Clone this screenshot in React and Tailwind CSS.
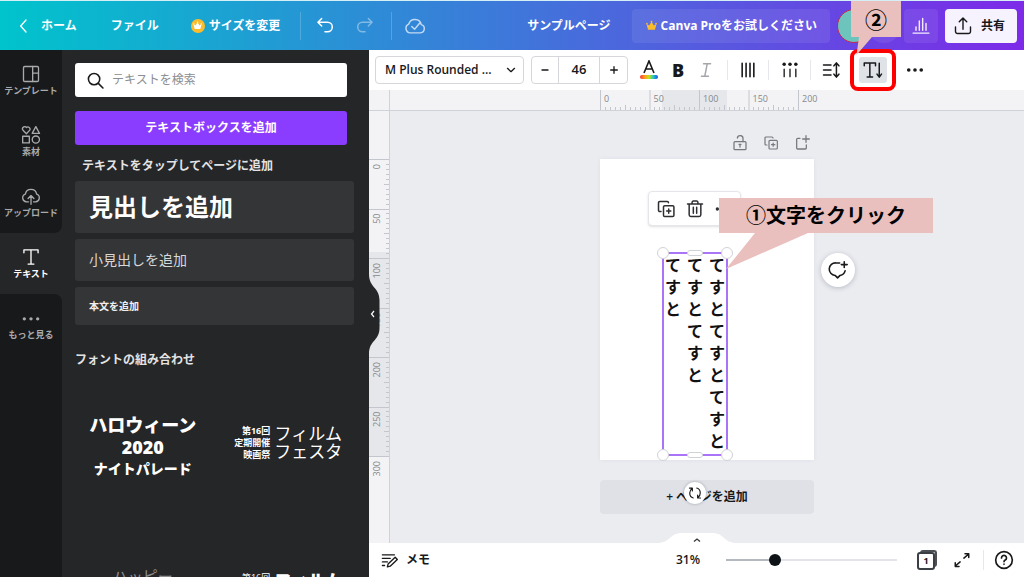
import { useState } from "react";

//labels on the rulers, one every 50mm
const topMarks = [0, 50, 100, 150, 200];
const sideMarks = [0, 50, 100, 150, 200, 250, 300];
//pixels for 50mm at the current zoom
const STEP = 49.5;

function Icon({ size = 20, width = 1.5, className = "", children }) {
  return (
    <svg
      width={size}
      height={size}
      viewBox="0 0 24 24"
      fill="none"
      stroke="currentColor"
      strokeWidth={width}
      strokeLinecap="round"
      strokeLinejoin="round"
      className={`shrink-0 ${className}`}
      aria-hidden="true"
    >
      {children}
    </svg>
  );
}

function Crown({ size, className }) {
  return (
    <svg
      width={size}
      height={size}
      viewBox="0 0 12 12"
      className={className}
      fill="currentColor"
      aria-hidden="true"
    >
      <path d="M2.2 10.5h7.6l1.6-6.2-2.9 1.8L6 1.6 3.500 6.100.6 4.300z" />
      <circle cx="6" cy="1.700" r="1" />
      <circle cx="1" cy="4" r=".9" />
      <circle cx="11" cy="4" r=".9" />
    </svg>
  );
}

const CopyIcon = ({ size }) => (
  <Icon size={size} width={1.8}>
    <path d="M6 15H4.500A1.500 1.500 0 0 1 3 13.500v-9A1.500 1.500 0 0 1 4.500 3h9A1.500 1.500 0 0 1 15 4.500" />
    <rect x="9" y="8" width="12.500" height="13" rx="1.500" />
    <path d="M15.250 12v5M12.750 14.500h5" />
  </Icon>
);

function Header() {
  return (
    <header className="flex h-[50px] shrink-0 items-center border-t border-[#d5eff7] bg-linear-to-r/srgb from-[#00c4cc] to-[#7d2ae8] pr-[7px] pl-4 text-xs font-bold text-white">
      <nav className="flex items-center">
        <a href="#home" className="flex items-center gap-[9px]">
          <Icon size={16} width={2}>
            <path d="M15 3l-8 9 8 9" />
          </Icon>
          ホーム
        </a>
        <button className="ml-[34px]">ファイル</button>
        <button className="ml-8 flex items-center gap-1">
          <span className="flex size-[14px] items-center justify-center rounded-full bg-[#fdbc2c]">
            <Crown size={9} className="text-white" />
          </span>
          サイズを変更
        </button>
      </nav>
      <div className="ml-5 h-7 w-px bg-white/20" />
      <button aria-label="元に戻す" className="ml-[14px]">
        <Icon size={20} width={1.800}>
          <path d="M8 3L3.500 7.500 8 12M3.500 7.500H15a5 5 0 0 1 0 11.500h-3" />
        </Icon>
      </button>
      <button aria-label="やり直す" className="ml-5 text-white/40">
        <Icon size={20} width={1.800}>
          <path d="M16 3l4.500 4.500L16 12M20.500 7.500H9A5 5 0 0 0 9 19h3" />
        </Icon>
      </button>
      <div className="ml-4 h-7 w-px bg-white/20" />
      <button aria-label="保存済み" className="ml-3 text-white/70">
        <Icon size={22} width={1.600}>
          <path d="M7 19.500a5 5 0 0 1-1.800-9.600A7 7 0 0 1 18.800 10.500a4.600 4.600 0 0 1-.8 9z" />
          <path d="M8.500 12.500l3 3 5.500-6.500" />
        </Icon>
      </button>
      <div className="ml-auto flex items-center">
        <button>サンプルページ</button>
        <button className="ml-[21px] flex h-[34px] items-center gap-1 rounded bg-white/8 pr-[13px] pl-[14px]">
          <Crown size={11} className="text-[#fdbc2c]" />
          Canva Proをお試しください
        </button>
        <button
          aria-label="アカウント"
          className="ml-[7px] size-[34px] rounded-full border border-[#c8254f] bg-[#6cc4bd]"
        />
        <button
          aria-label="メンバーを追加"
          className="-ml-1 size-[34px] rounded-full bg-white/8"
        />
        <button
          aria-label="インサイト"
          className="ml-[3px] flex size-[34px] items-center justify-center rounded bg-white/8"
        >
          <Icon size={20} width={1.700} className="text-white/90">
            <path d="M2.500 20.500h19M6 17v-4M10 17V6M14 17V3M18 17V9" />
          </Icon>
        </button>
        <button className="ml-[7px] flex h-[34px] w-[72px] items-center justify-center gap-2 rounded bg-[#f7f3fe] text-[#18191b]">
          <Icon size={20} width={1.700} className="-ml-1">
            <path d="M3 13v5.500A2.500 2.500 0 0 0 5.500 21h13a2.500 2.500 0 0 0 2.500-2.500V13M12 16V3M7.500 7L12 2.500 16.500 7" />
          </Icon>
          共有
        </button>
      </div>
    </header>
  );
}

const sideItems = [
  {
    name: "テンプレート",
    icon: (
      <>
        <rect x="3" y="3" width="18" height="18" rx="1.500" />
        <path d="M14 3v18M14 11h7" />
      </>
    ),
  },
  {
    name: "素材",
    icon: (
      <>
        <path d="M6.500 10.500L2.400 6.200A2.600 2.600 0 0 1 6.500 3a2.600 2.600 0 0 1 4 3.200zM17.800 2l4.400 8h-8.800z" />
        <rect x="2" y="13.500" width="8" height="8" />
        <circle cx="17.800" cy="17.500" r="4.300" />
      </>
    ),
  },
  {
    name: "アップロード",
    icon: (
      <>
        <path d="M9 19H6.500A4.800 4.800 0 0 1 5.200 9.700a6.900 6.900 0 0 1 13.600 0A4.800 4.800 0 0 1 17.500 19H15" />
        <path d="M12 22V12M8.500 15L12 11.500l3.500 3.500" />
      </>
    ),
  },
  {
    name: "テキスト",
    icon: <path d="M3.500 7V3.500h17V7M12 3.500v17M8.500 20.500h7" />,
  },
  {
    name: "もっと見る",
    icon: (
      <g fill="currentColor" stroke="none">
        <circle cx="4" cy="13" r="2" />
        <circle cx="12" cy="13" r="2" />
        <circle cx="20" cy="13" r="2" />
      </g>
    ),
  },
];

function Sidebar() {
  const [active, setActive] = useState(3);
  return (
    <nav className="flex w-[62px] shrink-0 flex-col bg-[#252627]">
      {sideItems.map((item, i) => (
        <button
          key={item.name}
          onClick={() => setActive(i)}
          className={`flex h-[61px] shrink-0 flex-col items-center justify-center gap-px text-[9px] leading-3 font-bold ${
            i === active ? "text-white" : "bg-[#18191b] text-[#a9aaab]"
          } ${i === active - 1 ? "rounded-br-lg" : ""} ${
            i === active + 1 ? "rounded-tr-lg" : ""
          }`}
        >
          <Icon size={20} width={1.600}>
            {item.icon}
          </Icon>
          {item.name}
        </button>
      ))}
      <div className="flex-1 bg-[#18191b]" />
    </nav>
  );
}

function FilmSample({ heavy }) {
  return (
    <button className="flex items-center gap-1">
      <span
        className={`text-right text-[9px] leading-3 ${heavy ? "" : "font-bold"}`}
      >
        第16回
        <br />
        定期開催
        <br />
        映画祭
      </span>
      <span
        className={`text-[17px] leading-[18px] ${heavy ? "font-black" : ""}`}
      >
        フィルム
        <br />
        フェスタ
      </span>
    </button>
  );
}

function TextPanel() {
  return (
    <section className="relative z-10 w-[307px] shrink-0 bg-[#252627] text-white">
      <div className="h-full overflow-hidden pt-[13px] pr-[15px] pl-[13px]">
        <div className="mr-[7px]">
          <label className="flex h-[34px] items-center gap-2 rounded-[3px] bg-white pl-3 text-[#18191b]">
            <Icon size={17} width={2.200}>
              <circle cx="10" cy="10" r="8" />
              <path d="M16 16l6.500 6.500" />
            </Icon>
            <input
              type="search"
              aria-label="テキストを検索"
              placeholder="テキストを検索"
              className="w-full text-xs outline-none placeholder:text-[#8c8e91]"
            />
          </label>
          <button className="mt-[14px] h-[34px] w-full rounded-[3px] bg-[#8b3dff] text-xs font-bold">
            テキストボックスを追加
          </button>
        </div>
        <h2 className="mt-[13px] ml-[7px] text-xs leading-4 font-bold text-[#e3e3e4]">
          テキストをタップしてページに追加
        </h2>
        <div className="mt-[7px] flex flex-col gap-[6px]">
          <button className="h-[52px] rounded-[3px] bg-[#343537] pl-[14px] text-left text-2xl font-bold">
            見出しを追加
          </button>
          <button className="h-[42px] rounded-[3px] bg-[#343537] pl-[14px] text-left text-sm text-[#d8d8d9]">
            小見出しを追加
          </button>
          <button className="h-[38px] rounded-[3px] bg-[#343537] pl-[14px] text-left text-[10px] font-bold text-[#f0f0f0]">
            本文を追加
          </button>
        </div>
        <h2 className="mt-[27px] text-xs leading-4 font-bold text-[#e3e3e4]">
          フォントの組み合わせ
        </h2>
        <div className="mt-11 grid grid-cols-2">
          <button className="h-[70px] pr-1 text-center font-black">
            <span className="block text-lg leading-[22px]">ハロウィーン</span>
            <span className="block text-lg leading-[22px]">2020</span>
            <span className="block text-sm leading-[22px]">ナイトパレード</span>
          </button>
          <div className="flex items-center justify-center pb-2 pl-2">
            <FilmSample />
          </div>
        </div>
        <div className="mt-[86px] grid grid-cols-2 items-start">
          <button className="pr-1 text-center text-[15px] leading-4 text-[#8c8d8e]">
            ハッピー
          </button>
          <div className="flex justify-center pt-1 pl-2">
            <FilmSample heavy />
          </div>
        </div>
      </div>
      <button
        aria-label="パネルを閉じる"
        className="absolute top-1/2 left-full -mt-10"
      >
        <svg width="11" height="80" viewBox="0 0 11 80" aria-hidden="true">
          <path
            d="M0 0C0 14 10.500 13 10.500 26v28C10.500 67 0 66 0 80z"
            fill="#252627"
          />
          <path
            d="M5 37l-2.500 3L5 43"
            fill="none"
            stroke="#fff"
            strokeWidth="1.200"
          />
        </svg>
      </button>
    </section>
  );
}

function Divider() {
  return <div className="h-5 w-px shrink-0 bg-[#e6e7ea]" />;
}

function Toolbar() {
  const [size, setSize] = useState(46);
  return (
    <div className="flex h-10 shrink-0 items-center bg-white pl-[6px] text-[#18191b]">
      <label className="relative flex h-7 w-[149px] items-center rounded border border-[#d5d7db]">
        <select
          aria-label="フォント"
          className="h-full w-full appearance-none pl-[9px] text-xs font-semibold outline-none"
        >
          <option>M Plus Rounded ...</option>
        </select>
        <Icon size={10} width={3.200} className="absolute right-[7px]">
          <path d="M3.500 8l8.500 8 8.500-8" />
        </Icon>
      </label>
      <div className="ml-[7px] flex h-7 rounded border border-[#d5d7db] text-[#18191b]">
        <button
          aria-label="小さく"
          className="flex w-[26px] items-center justify-center"
          onClick={() => setSize(size - 1)}
        >
          <Icon size={8} width={4}>
            <path d="M3 12h18" />
          </Icon>
        </button>
        <input
          aria-label="フォントサイズ"
          value={size}
          onChange={(e) => setSize(Number(e.target.value) || 0)}
          className="w-[42px] border-x border-[#d5d7db] text-center text-[13px] font-semibold outline-none"
        />
        <button
          aria-label="大きく"
          className="flex w-[27px] items-center justify-center"
          onClick={() => setSize(size + 1)}
        >
          <Icon size={8} width={4}>
            <path d="M2 12h20M12 2v20" />
          </Icon>
        </button>
      </div>
      <button aria-label="テキストの色" className="ml-[11px]">
        <svg width="20" height="20" viewBox="0 0 20 20" aria-hidden="true">
          <defs>
            <linearGradient id="rainbow">
              <stop offset="0" stopColor="#ff3131" />
              <stop offset=".25" stopColor="#ff9a1f" />
              <stop offset=".5" stopColor="#c5e21c" />
              <stop offset=".75" stopColor="#1cc8c8" />
              <stop offset="1" stopColor="#2448f0" />
            </linearGradient>
          </defs>
          <path
            d="M5 13L10 1l5 12M6.700 9h6.600"
            fill="none"
            stroke="currentColor"
            strokeWidth="1.600"
          />
          <rect x="1" y="15" width="18" height="4" rx="2" fill="url(#rainbow)" />
        </svg>
      </button>
      <button
        aria-label="太字"
        className="ml-[9px] w-5 text-center text-lg leading-5 font-extrabold"
      >
        B
      </button>
      <button aria-label="斜体" className="ml-2 text-[#a3a5a9]">
        <Icon size={20} width={1.700}>
          <path d="M9 4.500h8.500M6.500 19.500H15M13.500 4.500l-3 15" />
        </Icon>
      </button>
      <div className="ml-[11px]" />
      <Divider />
      <button aria-label="配置" className="ml-[10px]">
        <Icon size={20} width={1.900}>
          <path d="M5 4v16M9.700 4v16M14.400 4v16M19 4v16" />
        </Icon>
      </button>
      <div className="ml-[10px]" />
      <Divider />
      <button aria-label="リスト" className="ml-[11px]">
        <Icon size={20} width={1.600}>
          <path d="M5 11v9M12 11v9M19 11v9" />
          <g fill="currentColor" stroke="none">
            <circle cx="5" cy="5" r="2.100" />
            <circle cx="12" cy="5" r="2.100" />
            <circle cx="19" cy="5" r="2.100" />
          </g>
        </Icon>
      </button>
      <div className="ml-[10px]" />
      <Divider />
      <button aria-label="間隔" className="ml-[10px]">
        <Icon size={20} width={1.800}>
          <path d="M3 6h9M3 12h9M3 18h9M18.500 4v16M15.500 7l3-3.500 3 3.500M15.500 17l3 3.500 3-3.500" />
        </Icon>
      </button>
      <div className="relative ml-[18px]">
        <button
          aria-label="縦書き"
          className="flex h-[26px] w-7 items-center justify-center rounded-[3px] bg-[#dfe2e6]"
        >
          <Icon size={20} width={1.800}>
            <path d="M1.500 7V3.500h13.500V7M8.200 3.500v17M5 20.500h6.500M19.500 4v16M16.800 17l2.700 3.500 2.700-3.500" />
          </Icon>
        </button>
        {/* second step of the guide */}
        <div className="pointer-events-none absolute -inset-x-[9px] -inset-y-2 z-20 rounded-lg border-4 border-[#ff0000]" />
        <div className="pointer-events-none absolute -top-14 -left-2 z-30 flex h-9 w-[50px] items-center justify-center bg-[#eac0bf] text-[22px] font-bold text-black">
          ②
          <svg
            width="22"
            height="19"
            viewBox="0 0 22 19"
            className="absolute top-full left-0"
            aria-hidden="true"
          >
            <path d="M8 0h13L5.500 18z" fill="#eac0bf" />
          </svg>
        </div>
      </div>
      <button aria-label="その他" className="ml-[18px]">
        <Icon size={20}>
          <g fill="currentColor" stroke="none">
            <circle cx="4.500" cy="12" r="2.200" />
            <circle cx="12" cy="12" r="2.200" />
            <circle cx="19.500" cy="12" r="2.200" />
          </g>
        </Icon>
      </button>
    </div>
  );
}

function TopRuler() {
  return (
    <div className="flex h-[21px] shrink-0 overflow-hidden border-b border-[#cfd2d7] bg-[#f3f3f5]">
      <div className="w-[21px] shrink-0 border-r border-[#cfd2d7]" />
      <div className="flex flex-1 justify-center">
        <svg width="214" height="20" className="overflow-visible">
          <rect x="62" y="0" width="65" height="20" fill="#e6e7ea" />
          {topMarks.map((mark, i) => (
            <g key={mark} fill="#85888d" stroke="#c3c7cd">
              <path d={`M${i * STEP + 0.5} 0v20`} />
              {i < topMarks.length - 1 &&
                [1, 2, 3, 4, 5, 6, 7, 8, 9].map((n) => (
                  <path
                    key={n}
                    d={`M${Math.round(i * STEP + n * 4.95) + 0.5} 20v${n === 5 ? -5 : -3}`}
                  />
                ))}
              <text x={i * STEP + 4} y="12" fontSize="9" stroke="none">
                {mark}
              </text>
            </g>
          ))}
        </svg>
      </div>
    </div>
  );
}

function SideRuler() {
  return (
    <div className="w-[21px] shrink-0 overflow-hidden border-r border-[#cfd2d7] bg-[#f3f3f5]">
      <svg width="20" height="400" className="overflow-visible">
        <rect x="0" y="141" width="20" height="204" fill="#e6e7ea" />
        {sideMarks.map((mark, i) => (
          <g key={mark} fill="#85888d" stroke="#c3c7cd">
            <path d={`M0 ${Math.round(49 + i * STEP) - 0.5}h20`} />
            {i < sideMarks.length - 1 &&
              [1, 2, 3, 4, 5, 6, 7, 8, 9].map((n) => (
                <path
                  key={n}
                  d={`M20 ${Math.round(49 + i * STEP + n * 4.95) - 0.5}h${n === 5 ? -5 : -3}`}
                />
              ))}
            <text
              transform={`translate(11 ${49 + i * STEP + 4}) rotate(-90)`}
              textAnchor="end"
              fontSize="9"
              stroke="none"
            >
              {mark}
            </text>
          </g>
        ))}
      </svg>
    </div>
  );
}

//corner and edge handles of the selected text box
const handles = [
  "size-3 -top-[7px] -left-[7px]",
  "size-3 -top-[7px] -right-[7px]",
  "size-3 -bottom-[7px] -left-[7px]",
  "size-3 -bottom-[7px] -right-[7px]",
  "h-[6px] w-4 -top-1 left-[23px]",
  "h-[6px] w-4 -bottom-1 left-[23px]",
];

function Page() {
  return (
    <div className="relative h-[301px] w-full bg-white shadow-[0_0_4px_rgba(64,87,109,0.08)]">
      <div className="absolute top-8 left-12 flex h-[35px] w-[93px] items-center gap-[9px] rounded border border-[#e4e6ea] bg-white pl-[7px] text-[#2c2e31] shadow-sm">
        <button aria-label="複製">
          <CopyIcon size={20} />
        </button>
        <button aria-label="削除">
          <Icon size={20} width={1.800}>
            <path d="M3 6h18M8.500 5.500V4A1.500 1.500 0 0 1 10 2.500h4A1.500 1.500 0 0 1 15.500 4v1.500M5 6v13a2 2 0 0 0 2 2h10a2 2 0 0 0 2-2V6M10 10v7M14 10v7" />
          </Icon>
        </button>
        <button aria-label="その他">
          <Icon size={20}>
            <g fill="currentColor" stroke="none">
              <circle cx="4" cy="12" r="2" />
              <circle cx="12" cy="12" r="2" />
              <circle cx="20" cy="12" r="2" />
            </g>
          </Icon>
        </button>
      </div>

      <div className="absolute top-[93px] left-[62px] h-[204px] w-[66px] border-2 border-[#a974f7]">
        {/* vertical text, one character a line, read from the right column */}
        <div className="flex flex-row-reverse justify-center gap-[6px] text-base leading-[22px] font-bold text-[#111]">
          <p className="w-4 break-all">てすとてすとてすと</p>
          <p className="w-4 break-all">てすとてすと</p>
          <p className="w-4 break-all">てすと</p>
        </div>
        {handles.map((place) => (
          <span
            key={place}
            className={`absolute rounded-full border border-[#cfd2d7] bg-white ${place}`}
          />
        ))}
        <button
          aria-label="回転"
          className="absolute -bottom-[50px] left-5 z-10 flex size-[22px] items-center justify-center rounded-full bg-white shadow-[0_0_3px_rgba(30,40,60,0.35)]"
        >
          <Icon size={14} width={2}>
            <path d="M9 20.500c-4-1-6-4.500-6-8.500s1.500-6 4-8M7.500 8.500V3.500h-5M15 3.500c4 1 6 4.500 6 8.500s-1.500 6-4 8M16.500 15.500v5h5" />
          </Icon>
        </button>
      </div>

      <button
        aria-label="コメントを追加"
        className="absolute top-[94px] left-[221px] flex size-[34px] items-center justify-center rounded-full bg-white shadow-[0_1px_5px_rgba(64,70,100,0.3)]"
      >
        <Icon size={20} width={1.900}>
          <path d="M14 3.500H9.500a7.500 7.500 0 0 0-1 15l3 3 3-3a7.500 7.500 0 0 0 6-5.500M19.500 2v7M16 5.500h7" />
        </Icon>
      </button>

      {/* first step of the guide */}
      <div className="absolute top-[39px] left-[119px] z-20 flex h-[35px] w-[214px] items-center justify-center bg-[#eac0bf] text-xl font-bold whitespace-nowrap text-black">
        ①文字をクリック
        <svg
          width="90"
          height="36"
          viewBox="0 0 90 36"
          className="absolute top-full left-0"
          aria-hidden="true"
        >
          <path d="M36 0h53L7 36z" fill="#eac0bf" />
        </svg>
      </div>
    </div>
  );
}

function Workspace() {
  return (
    <div className="flex min-h-0 flex-1">
      <SideRuler />
      <div className="flex flex-1 justify-center overflow-hidden bg-[#ebecf0]">
        <div className="w-[214px] text-[#18191b]">
          <div className="flex h-12 items-center justify-end gap-[15px] pt-4 pr-1 text-[#76797e]">
            <button aria-label="ロック">
              <Icon size={16} width={1.900}>
                <rect x="3" y="10" width="18" height="12" rx="1.500" />
                <path d="M8 4.500a4.300 4.300 0 0 1 8.500 1.200V10M12 14v4M10.500 14h3" />
              </Icon>
            </button>
            <button aria-label="ページを複製">
              <CopyIcon size={16} />
            </button>
            <button aria-label="新しいページ">
              <Icon size={16} width={1.900}>
                <path d="M9 5H5.500A1.500 1.500 0 0 0 4 6.500v13A1.500 1.500 0 0 0 5.500 21H17a1.500 1.500 0 0 0 1.500-1.500V15M18 1v10M13 6h10" />
              </Icon>
            </button>
          </div>
          <Page />
          <button className="mt-5 h-[34px] w-full rounded bg-[#dfe1e6] text-xs font-semibold">
            + ページを追加
          </button>
        </div>
      </div>
    </div>
  );
}

function BottomBar() {
  return (
    <footer className="relative flex h-[34px] shrink-0 items-center bg-white pr-[10px] pl-3 text-xs text-[#18191b]">
      <button
        aria-label="ページを表示"
        className="absolute bottom-full left-1/2 -ml-10"
      >
        <svg width="80" height="10" viewBox="0 0 80 10" aria-hidden="true">
          <path d="M0 10C14 10 12 0 25 0h30C68 0 66 10 80 10z" fill="#fff" />
          <path
            d="M37 8.500L40 6l3 2.500"
            fill="none"
            stroke="#33363a"
            strokeWidth="1.300"
          />
        </svg>
      </button>
      <button className="flex items-center gap-2 font-bold">
        <Icon size={17} width={1.900}>
          <path d="M2 4h17M2 9h11M2 14h7M2 19h3M9 21l1-4L20 7.500l3 3L13 20zM9 21l4-1" />
        </Icon>
        メモ
      </button>
      <div className="ml-auto flex items-center">
        <label htmlFor="zoom" className="font-semibold">
          31%
        </label>
        <input
          id="zoom"
          type="range"
          defaultValue={27}
          className="ml-[26px] h-3 w-[171px] appearance-none bg-transparent [&::-webkit-slider-runnable-track]:h-[2px] [&::-webkit-slider-runnable-track]:bg-linear-to-r [&::-webkit-slider-runnable-track]:from-[#b4b9c0] [&::-webkit-slider-runnable-track]:from-28% [&::-webkit-slider-runnable-track]:to-[#e2e4e8] [&::-webkit-slider-runnable-track]:to-28% [&::-webkit-slider-thumb]:-mt-[5px] [&::-webkit-slider-thumb]:size-3 [&::-webkit-slider-thumb]:appearance-none [&::-webkit-slider-thumb]:rounded-full [&::-webkit-slider-thumb]:bg-[#0e1318]"
        />
        <button
          aria-label="ページ一覧"
          className="relative ml-5 flex size-5 items-end"
        >
          <span className="absolute top-0 right-0 size-[17px] rounded-[3px] border-t-2 border-r-2 border-[#4b4e53]" />
          <span className="relative flex size-[18px] items-center justify-center rounded-[3px] border-2 border-[#3b3e42] bg-white text-[9px] font-bold">
            1
          </span>
        </button>
        <button aria-label="全画面表示" className="ml-4">
          <Icon size={18} width={2}>
            <path d="M14.500 9.500L21 4M16 3.500h5v5M9.500 14.500L3 20M3 15.500v5h5" />
          </Icon>
        </button>
        <div className="mr-[10px] ml-3">
          <Divider />
        </div>
        <button aria-label="ヘルプ">
          <Icon size={20} width={2}>
            <circle cx="12" cy="12" r="10" />
            <path d="M9 9.500a3 3 0 1 1 4.500 2.600c-1 .6-1.500 1-1.500 2M12 17v.2" />
          </Icon>
        </button>
      </div>
    </footer>
  );
}

export default function App() {
  return (
    <div
      lang="ja"
      className="flex h-screen flex-col overflow-hidden font-[Open_Sans,Noto_Sans_CJK_JP,sans-serif]"
    >
      <Header />
      <div className="flex min-h-0 flex-1">
        <Sidebar />
        <TextPanel />
        <main className="flex min-w-0 flex-1 flex-col">
          <Toolbar />
          <TopRuler />
          <Workspace />
          <BottomBar />
        </main>
      </div>
    </div>
  );
}
